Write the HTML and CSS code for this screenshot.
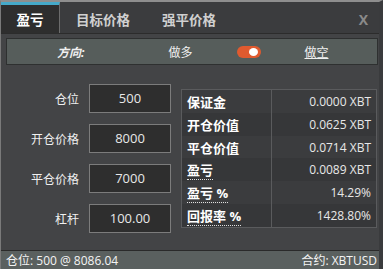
FILE: index.html
```html
<!DOCTYPE html>
<html lang="zh">
<head>
    <meta charset="UTF-8">
    <title>盈亏计算器</title>
    <link rel="stylesheet" href="styles.css">
</head>
<body>
    <div class="calc">
        <div class="tabs">
            <div class="tab active">盈亏</div>
            <div class="tab">目标价格</div>
            <div class="tab">强平价格</div>
            <div class="close">X</div>
        </div>
        <div class="main">
            <div class="side">
                <span class="side-label">方向:</span>
                <span class="side-long">做多</span>
                <span class="toggle"><span class="knob"></span></span>
                <span class="side-short">做空</span>
            </div>
            <div class="content">
                <div class="form">
                    <div class="row"><label>仓位</label><div class="input">500</div></div>
                    <div class="row"><label>开仓价格</label><div class="input">8000</div></div>
                    <div class="row"><label>平仓价格</label><div class="input">7000</div></div>
                    <div class="row"><label>杠杆</label><div class="input">100.00</div></div>
                </div>
                <table class="results">
                    <tr><th>保证金</th><td>0.0000 XBT</td></tr>
                    <tr><th>开仓价值</th><td>0.0625 XBT</td></tr>
                    <tr><th>平仓价值</th><td>0.0714 XBT</td></tr>
                    <tr><th><span class="dotted">盈亏</span></th><td>0.0089 XBT</td></tr>
                    <tr><th><span class="dotted">盈亏 %</span></th><td>14.29%</td></tr>
                    <tr><th><span class="dotted">回报率 %</span></th><td>1428.80%</td></tr>
                </table>
            </div>
        </div>
        <div class="footer">
            <span>仓位: 500 @ 8086.04</span>
            <span>合约: XBTUSD</span>
        </div>
    </div>
</body>
</html>
```

FILE: styles.css
```css
body{
    margin: 0;
    background: #434446;
    font-family: 'Open Sans', 'Noto Sans CJK SC', sans-serif;
}

.calc{
    width: 383px;
    height: 269px;
    box-sizing: border-box;
    border-top: 2px solid #8e8e8e;
    border-left: 1px solid #7a7a7a;
    border-right: 4px solid #3a3b3d;
    display: flex;
    flex-direction: column;
    overflow: hidden;
}

.tabs{
    height: 31px;
    display: flex;
    align-items: stretch;
    background: #3b3c3e;
    border-bottom: 1px solid #2c2c2c;
}

.tab{
    font-size: 13.5px;
    font-weight: bold;
    color: #d0d0d0;
    padding: 0 16px;
    display: flex;
    align-items: center;
    padding-top: 3px;
}

.tab.active{
    width: 59px;
    box-sizing: border-box;
    padding: 0;
    justify-content: center;
    background: #2e2e2e;
    color: #ffffff;
    border-top: 3px solid #45a9c9;
    border-right: 1px solid #6c6c6c;
}

.close{
    margin-left: auto;
    margin-right: 11px;
    font-size: 14px;
    font-weight: bold;
    color: #8a8a8a;
    display: flex;
    align-items: center;
    padding-top: 3px;
}

.main{
    flex: 1;
    background: #434446;
    padding: 4px 1px 0 5px;
}

.side{
    height: 25px;
    background: #565d5b;
    border: 1px solid #2e3030;
    display: flex;
    align-items: center;
    font-size: 12px;
    color: #f0f0f0;
}

.side-label{
    font-style: italic;
    font-weight: bold;
    margin-left: 50px;
}

.side-long{
    margin-left: 84px;
}

.toggle{
    margin-left: 45px;
    width: 24px;
    height: 12px;
    border-radius: 6px;
    background: #e05a2f;
    position: relative;
}

.knob{
    position: absolute;
    right: 3px;
    top: 2px;
    width: 9px;
    height: 8px;
    border-radius: 50%;
    background: #ffffff;
}

.side-short{
    margin-left: 43px;
    text-decoration: underline;
}

.content{
    display: flex;
    margin-top: 19px;
}

.form{
    display: flex;
    flex-direction: column;
    gap: 11px;
}

.row{
    display: flex;
    align-items: center;
}

.row label{
    width: 73px;
    text-align: right;
    padding-right: 10px;
    font-size: 12px;
    color: #f0f0f0;
}

.input{
    width: 80px;
    height: 27px;
    line-height: 27px;
    background: #2e2e2e;
    border: 1px solid #7c7c7c;
    color: #e8e8e8;
    text-align: center;
    font-size: 13px;
}

.results{
    margin-left: 10px;
    margin-top: 5px;
    width: 196px;
    border-collapse: collapse;
    border: 1px solid #5a5b5d;
    height: 139px;
}

.results tr:nth-child(odd){
    background: #3b3c3e;
}

.results tr:nth-child(even){
    background: #363739;
}

.results th{
    width: 84px;
    text-align: left;
    padding: 0 0 0 5px;
    font-size: 13px;
    font-weight: bold;
    color: #ffffff;
    border-right: 1px solid #5a5b5d;
}

.results td{
    text-align: right;
    padding: 0 5px 0 0;
    font-size: 12px;
    color: #e8e8e8;
}

.dotted{
    border-bottom: 1px dotted #e0e0e0;
}

.footer{
    height: 18px;
    background: #5a605f;
    border-top: 1px solid #2a2a2a;
    display: flex;
    justify-content: space-between;
    align-items: center;
    padding: 0 2px 0 5px;
    font-size: 12px;
    color: #f4f4f4;
}
```
